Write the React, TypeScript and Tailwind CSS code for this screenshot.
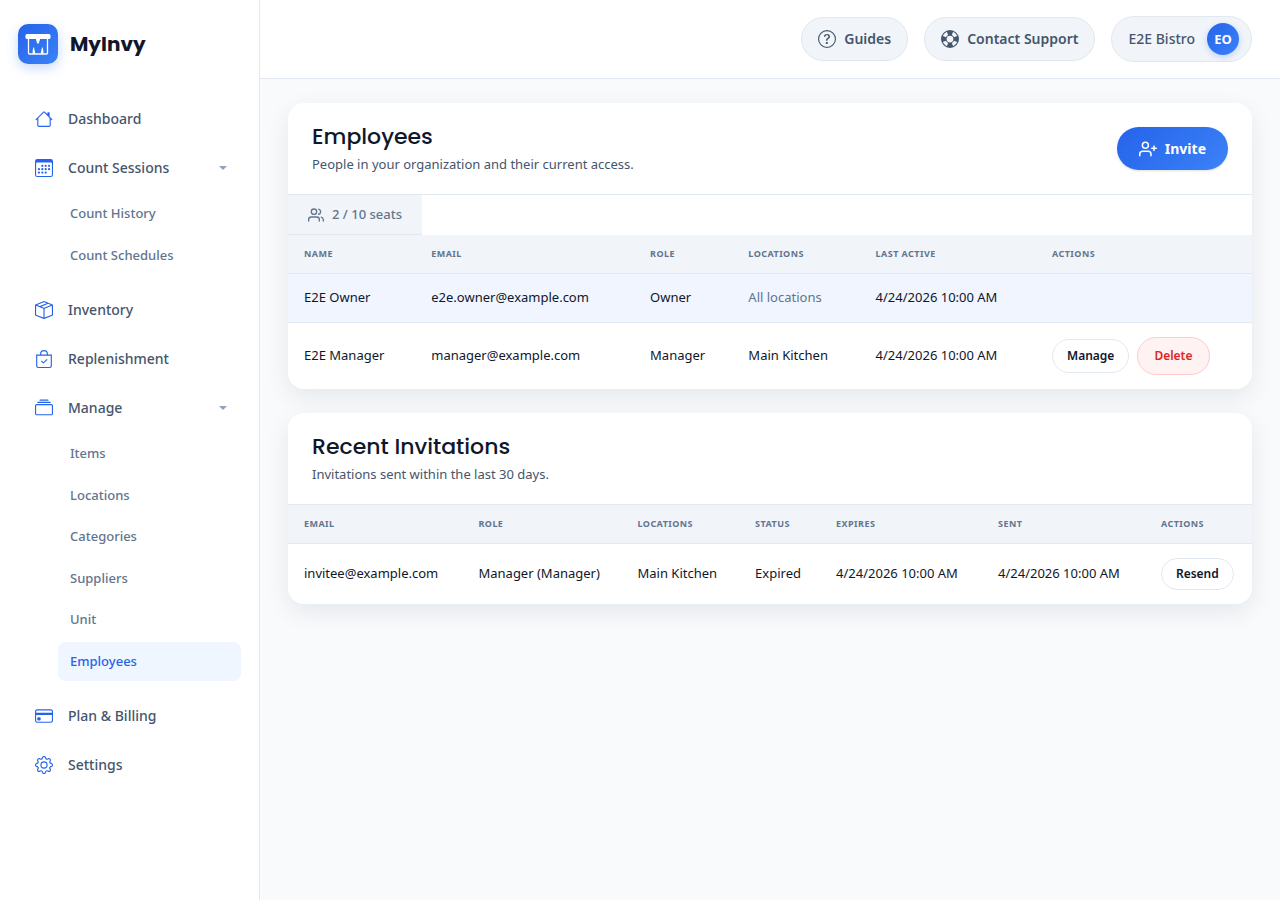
import type { ReactNode } from "react";
import {
  BsBagCheck,
  BsBoxSeam,
  BsCalendar3,
  BsCollection,
  BsCreditCard,
  BsGear,
  BsHouse,
  BsLifePreserver,
  BsQuestionCircle,
} from "react-icons/bs";
import { FiUserPlus, FiUsers } from "react-icons/fi";
import type { IconType } from "react-icons";

type NavItem = {
  label: string;
  icon: IconType;
  children?: string[];
};

const navItems: NavItem[] = [
  { label: "Dashboard", icon: BsHouse },
  { label: "Count Sessions", icon: BsCalendar3, children: ["Count History", "Count Schedules"] },
  { label: "Inventory", icon: BsBoxSeam },
  { label: "Replenishment", icon: BsBagCheck },
  {
    label: "Manage",
    icon: BsCollection,
    children: ["Items", "Locations", "Categories", "Suppliers", "Unit", "Employees"],
  },
  { label: "Plan & Billing", icon: BsCreditCard },
  { label: "Settings", icon: BsGear },
];

const activePage = "Employees";

const employees = [
  {
    name: "E2E Owner",
    email: "e2e.owner@example.com",
    role: "Owner",
    locations: "All locations",
    lastActive: "4/24/2026 10:00 AM",
    isSelf: true,
  },
  {
    name: "E2E Manager",
    email: "manager@example.com",
    role: "Manager",
    locations: "Main Kitchen",
    lastActive: "4/24/2026 10:00 AM",
    isSelf: false,
  },
];

const invitations = [
  {
    email: "invitee@example.com",
    role: "Manager (Manager)",
    locations: "Main Kitchen",
    status: "Expired",
    expires: "4/24/2026 10:00 AM",
    sent: "4/24/2026 10:00 AM",
  },
];

function Logo() {
  return (
    <a href="#" className="flex items-center gap-3">
      <span className="flex size-10 items-center justify-center rounded-[10px] bg-linear-135/srgb from-[#2563eb] to-[#3b82f6] shadow-[0_4px_12px_rgba(37,99,235,0.25)]">
        <svg viewBox="0 0 26 24" className="h-6 w-[26px]" fill="none" aria-hidden="true">
          <rect x="0.5" y="2" width="25" height="5" rx="1.5" fill="#fff" />
          <path d="M3.5 7v14q0 1 1 1h17q1 0 1-1V7" stroke="#fff" strokeWidth="1.3" />
          <path d="M10.8 6.5h4.4L14 11q-1 1.4-2 0z" fill="#fff" />
          <path d="M7.6 22v-2.5q.6-5 1.4-4l1.4 6.5zM18.4 22v-2.5q-.6-5-1.4-4l-1.4 6.5z" fill="#fff" />
        </svg>
      </span>
      <span className="font-[Poppins,Inter,sans-serif] text-xl font-bold text-slate-900">MyInvy</span>
    </a>
  );
}

function Caret() {
  return (
    <svg viewBox="0 0 8 4" className="h-1 w-2 text-slate-400" fill="currentColor" aria-hidden="true">
      <path d="M0 0h8L4 4z" />
    </svg>
  );
}

function Sidebar() {
  return (
    <aside className="w-[260px] shrink-0 border-r border-slate-200 bg-white">
      <div className="px-[18px] py-6">
        <Logo />
      </div>
      <nav className="flex flex-col gap-1 px-[18px] pt-2">
        {navItems.map(({ label, icon: Icon, children }) => (
          <div key={label}>
            <a
              href="#"
              className="flex h-[45px] items-center gap-[15px] pr-[14px] pl-[17px] text-sm font-medium text-slate-600"
            >
              <Icon size={18} className="text-[#2563eb]" />
              <span className="flex-1">{label}</span>
              {children && <Caret />}
            </a>
            {children && (
              <ul className="flex flex-col gap-[2px] pt-1 pb-2 pl-10">
                {children.map((child) => (
                  <li key={child}>
                    <a
                      href="#"
                      className={
                        child === activePage
                          ? "block rounded-lg bg-[#eff6ff] px-3 py-[10px] text-[13px] leading-normal font-medium text-[#2563eb]"
                          : "block rounded-lg px-3 py-[10px] text-[13px] leading-normal font-medium text-slate-500"
                      }
                    >
                      {child}
                    </a>
                  </li>
                ))}
              </ul>
            )}
          </div>
        ))}
      </nav>
    </aside>
  );
}

function Topbar() {
  return (
    <header className="flex h-[79px] items-center justify-end gap-4 border-b border-slate-200 bg-white px-7">
      <a
        href="#"
        className="flex h-11 items-center gap-2 rounded-full border border-slate-200 bg-slate-100 px-4 text-sm font-semibold text-slate-600"
      >
        <BsQuestionCircle size={18} />
        Guides
      </a>
      <a
        href="#"
        className="flex h-11 items-center gap-2 rounded-full border border-slate-200 bg-slate-100 px-4 text-sm font-semibold text-slate-600"
      >
        <BsLifePreserver size={18} />
        Contact Support
      </a>
      <button
        type="button"
        className="flex h-[46px] items-center gap-3 rounded-full border border-slate-200 bg-slate-100 pr-3 pl-4 text-sm font-medium text-slate-600"
      >
        E2E Bistro
        <span className="flex size-8 items-center justify-center rounded-full bg-linear-135/srgb from-[#2563eb] to-[#3b82f6] text-[13px] font-bold text-white shadow-[0_2px_6px_rgba(37,99,235,0.25)]">
          EO
        </span>
      </button>
    </header>
  );
}

function Card({
  title,
  subtitle,
  action,
  children,
}: {
  title: string;
  subtitle: string;
  action?: ReactNode;
  children: ReactNode;
}) {
  return (
    <section className="overflow-hidden rounded-2xl bg-white shadow-[0_8px_24px_rgba(15,23,42,0.08)]">
      <div className="flex items-start justify-between border-b border-slate-200 px-6 pt-[18px] pb-[18px]">
        <div>
          <h2 className="font-[Poppins,Inter,sans-serif] text-[22px] leading-8 font-medium text-slate-900">{title}</h2>
          <p className="text-[13px] leading-[23px] text-slate-600">{subtitle}</p>
        </div>
        {action}
      </div>
      {children}
    </section>
  );
}

function HeadCell({ className, children }: { className?: string; children: ReactNode }) {
  return (
    <th scope="col" className={`px-4 text-left text-[9px] font-bold tracking-wider text-slate-500 uppercase ${className ?? ""}`}>
      {children}
    </th>
  );
}

function EmployeesCard() {
  return (
    <Card
      title="Employees"
      subtitle="People in your organization and their current access."
      action={
        <button
          type="button"
          className="mt-[6px] flex h-[43px] items-center gap-2 rounded-full bg-linear-135/srgb from-[#2563eb] to-[#3b82f6] px-[22px] text-sm font-bold text-white shadow-sm"
        >
          <FiUserPlus size={18} />
          Invite
        </button>
      }
    >
      <div className="flex">
        <div className="flex h-10 items-center gap-2 border-b border-slate-200 bg-slate-100 px-5 text-[13px] font-medium text-slate-500">
          <FiUsers size={16} />
          2 / 10 seats
        </div>
      </div>
      <table className="w-full table-fixed text-[13px] text-slate-900">
        <thead>
          <tr className="h-[38px] border-b border-slate-200 bg-slate-100">
            <HeadCell className="w-[13.2%]">Name</HeadCell>
            <HeadCell className="w-[22.7%]">Email</HeadCell>
            <HeadCell className="w-[10.2%]">Role</HeadCell>
            <HeadCell className="w-[13.2%]">Locations</HeadCell>
            <HeadCell className="w-[18.3%]">Last Active</HeadCell>
            <HeadCell>Actions</HeadCell>
          </tr>
        </thead>
        <tbody>
          {employees.map((employee) => (
            <tr
              key={employee.email}
              className={employee.isSelf ? "h-[49px] border-b border-slate-200 bg-[#f0f5ff]" : "h-[67px]"}
            >
              <td className="px-4">{employee.name}</td>
              <td className="px-4">{employee.email}</td>
              <td className="px-4">{employee.role}</td>
              <td className={employee.isSelf ? "px-4 text-slate-500" : "px-4"}>{employee.locations}</td>
              <td className="px-4">{employee.lastActive}</td>
              <td className="px-4">
                {!employee.isSelf && (
                  <div className="flex items-center gap-2">
                    <button
                      type="button"
                      className="h-[34px] rounded-full border border-slate-200 bg-white px-[14px] text-xs font-semibold"
                    >
                      Manage
                    </button>
                    <button
                      type="button"
                      className="h-[38px] rounded-full border border-[#fecaca] bg-[#fef2f2] px-4 text-xs font-semibold text-[#dc2626]"
                    >
                      Delete
                    </button>
                  </div>
                )}
              </td>
            </tr>
          ))}
        </tbody>
      </table>
    </Card>
  );
}

function InvitationsCard() {
  return (
    <Card title="Recent Invitations" subtitle="Invitations sent within the last 30 days.">
      <table className="w-full table-fixed text-[13px] text-slate-900">
        <thead>
          <tr className="h-[38px] border-b border-slate-200 bg-slate-100">
            <HeadCell className="w-[18.1%]">Email</HeadCell>
            <HeadCell className="w-[16.5%]">Role</HeadCell>
            <HeadCell className="w-[12.2%]">Locations</HeadCell>
            <HeadCell className="w-[8.4%]">Status</HeadCell>
            <HeadCell className="w-[16.8%]">Expires</HeadCell>
            <HeadCell className="w-[16.9%]">Sent</HeadCell>
            <HeadCell>Actions</HeadCell>
          </tr>
        </thead>
        <tbody>
          {invitations.map((invite) => (
            <tr key={invite.email} className="h-[61px]">
              <td className="px-4">{invite.email}</td>
              <td className="px-4">{invite.role}</td>
              <td className="px-4">{invite.locations}</td>
              <td className="px-4">{invite.status}</td>
              <td className="px-4">{invite.expires}</td>
              <td className="px-4">{invite.sent}</td>
              <td className="px-4">
                <button
                  type="button"
                  className="h-8 rounded-full border border-slate-200 bg-white px-[14px] text-xs font-semibold"
                >
                  Resend
                </button>
              </td>
            </tr>
          ))}
        </tbody>
      </table>
    </Card>
  );
}

export default function App() {
  return (
    <div className="flex min-h-screen bg-slate-50 font-['Noto_Sans','Open_Sans',sans-serif]">
      <Sidebar />
      <div className="min-w-0 flex-1">
        <Topbar />
        <main className="flex flex-col gap-6 px-7 py-6">
          <EmployeesCard />
          <InvitationsCard />
        </main>
      </div>
    </div>
  );
}
